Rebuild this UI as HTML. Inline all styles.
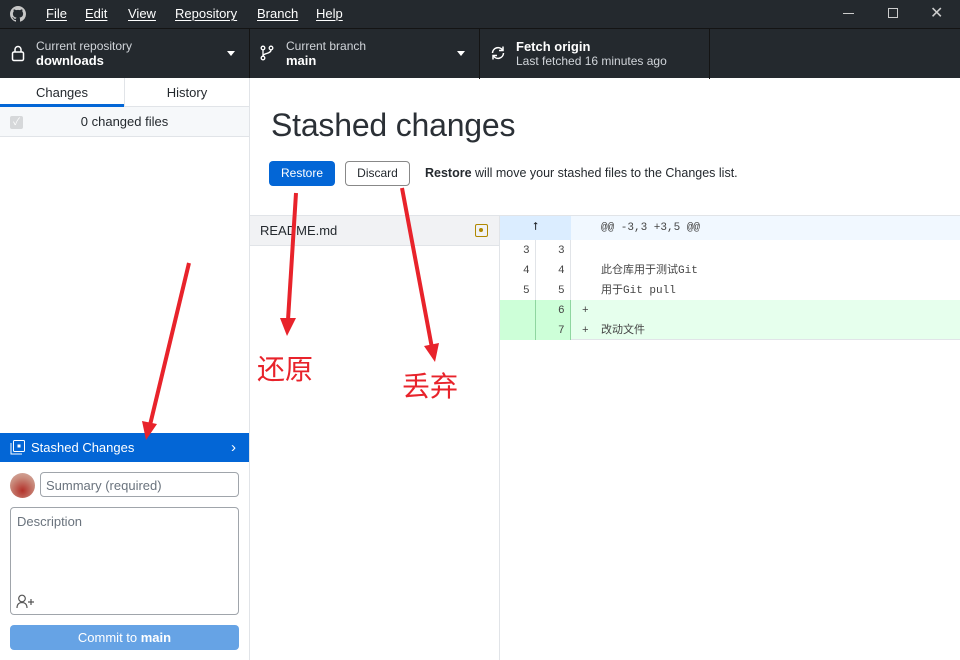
<!DOCTYPE html>
<html><head><meta charset="utf-8"><style>
*{box-sizing:border-box;margin:0;padding:0}
body{width:960px;height:660px;overflow:hidden;font-family:"Liberation Sans","Noto Sans CJK SC",sans-serif;font-size:13px;color:#24292e;background:#fff;position:relative}
.abs{position:absolute}
.title{left:0;top:0;width:960px;height:28px;background:#24292e;color:#fff}
.menu span{position:absolute;top:6px;font-size:13px;color:#fff;text-decoration:underline;text-decoration-thickness:1px;text-underline-offset:2px}
.tool{left:0;top:28px;width:960px;height:50px;background:#24292e;border-top:1px solid #141414}
.tb{position:absolute;top:0;height:50px;border-right:1px solid #141414;color:#fff}
.tb .l1{position:absolute;top:10px;font-size:12px;color:#d1d5da}
.tb .l2{position:absolute;top:24px;font-size:13px;font-weight:bold}
.caret{position:absolute;top:22px;width:0;height:0;border-left:4px solid transparent;border-right:4px solid transparent;border-top:5px solid #fff}
.mono{font-family:"Liberation Mono","Noto Sans CJK SC",monospace;font-size:11px;color:#444;height:20px;line-height:20px;white-space:nowrap}
</style></head><body>
<div class="abs title">
<svg class="abs" style="left:10px;top:6px" width="16" height="16" viewBox="0 0 16 16"><path fill="#c7c7c7" d="M8 0C3.58 0 0 3.58 0 8c0 3.54 2.29 6.53 5.47 7.59.4.07.55-.17.55-.38v-1.33c-2.23.48-2.7-1.07-2.7-1.07-.36-.92-.89-1.17-.89-1.17-.73-.5.05-.49.05-.49.8.06 1.23.83 1.23.83.72 1.22 1.87.87 2.33.67.07-.52.28-.87.51-1.07-1.78-.2-3.65-.89-3.65-3.95 0-.87.31-1.59.82-2.15-.08-.2-.36-1.02.08-2.12 0 0 .67-.21 2.2.82A7.6 7.6 0 0 1 8 3.9c.68 0 1.36.09 2 .27 1.53-1.04 2.2-.82 2.2-.82.44 1.1.16 1.92.08 2.12.51.56.82 1.28.82 2.15 0 3.07-1.87 3.75-3.65 3.95.29.25.54.73.54 1.48v2.2c0 .21.15.46.55.38A8 8 0 0 0 16 8c0-4.42-3.58-8-8-8z"/></svg>
<div class="menu"><span style="left:46px">File</span><span style="left:85px">Edit</span><span style="left:128px">View</span><span style="left:175px">Repository</span><span style="left:257px">Branch</span><span style="left:316px">Help</span></div>
<div class="abs" style="left:843px;top:13px;width:11px;height:1px;background:#ccc"></div>
<div class="abs" style="left:888px;top:8px;width:10px;height:10px;border:1px solid #ccc"></div>
<div class="abs" style="left:930px;top:3px;color:#ccc;font-size:16px">✕</div>
</div>
<div class="abs tool">
<div class="tb" style="left:0;width:250px">
<svg class="abs" style="left:11px;top:16px" width="14" height="17" viewBox="0 0 14 17"><rect x="1.5" y="7" width="11" height="8.5" rx="1.5" fill="none" stroke="#fff" stroke-width="1.5"/><path d="M4 7V4.5a3 3 0 0 1 6 0V7" fill="none" stroke="#fff" stroke-width="1.5"/></svg>
<div class="l1" style="left:36px">Current repository</div><div class="l2" style="left:36px">downloads</div><div class="caret" style="left:227px"></div></div>
<div class="tb" style="left:250px;width:230px">
<svg class="abs" style="left:10px;top:16px" width="14" height="16" viewBox="0 0 14 16"><circle cx="3" cy="3" r="1.8" fill="none" stroke="#fff" stroke-width="1.3"/><circle cx="3" cy="13" r="1.8" fill="none" stroke="#fff" stroke-width="1.3"/><circle cx="11" cy="3" r="1.8" fill="none" stroke="#fff" stroke-width="1.3"/><path d="M3 5v6M11 5c0 4-8 3-8 6" fill="none" stroke="#fff" stroke-width="1.3"/></svg>
<div class="l1" style="left:36px">Current branch</div><div class="l2" style="left:36px">main</div><div class="caret" style="left:207px"></div></div>
<div class="tb" style="left:480px;width:230px">
<svg class="abs" style="left:10px;top:16px" width="16" height="16" viewBox="0 0 16 16"><path d="M13.5 8a5.5 5.5 0 0 1-10 3M2.5 8a5.5 5.5 0 0 1 10-3" fill="none" stroke="#fff" stroke-width="1.5"/><path d="M13 1.5v4h-4M3 14.5v-4h4" fill="none" stroke="#fff" stroke-width="1.5"/></svg>
<div class="l2" style="left:36px;top:10px">Fetch origin</div><div class="l1" style="left:36px;top:25px">Last fetched 16 minutes ago</div></div>
</div>
<div class="abs" style="left:0;top:78px;width:250px;height:582px;border-right:1px solid #e1e4e8">
<div class="abs" style="left:0;top:0;width:124px;height:29px;border-bottom:3px solid #0366d6;text-align:center;line-height:30px">Changes</div>
<div class="abs" style="left:124px;top:0;width:125px;height:29px;border-left:1px solid #e1e4e8;border-bottom:1px solid #e1e4e8;text-align:center;line-height:30px">History</div>
<div class="abs" style="left:0;top:29px;width:249px;height:30px;background:#f6f8fa;border-bottom:1px solid #e1e4e8;text-align:center;line-height:30px">0 changed files</div>
<div class="abs" style="left:10px;top:38px;width:13px;height:13px;background:#d6d8da;border-radius:2px;color:#fff;font-size:10px;line-height:13px;text-align:center">✓</div>
<div class="abs" style="left:0;top:355px;width:249px;height:29px;background:#0366d6;color:#fff;line-height:29px;padding-left:31px">Stashed Changes<span style="position:absolute;right:13px;font-size:15px">›</span>
<svg class="abs" style="left:10px;top:7px" width="15" height="15" viewBox="0 0 15 15"><rect x="3.5" y="0.5" width="11" height="11" rx="1" fill="none" stroke="#fff"/><path d="M1 3v11h11" fill="none" stroke="#fff"/><rect x="7.5" y="4.5" width="3" height="3" fill="#fff"/></svg></div>
<div class="abs" style="left:10px;top:395px;width:25px;height:25px;border-radius:50%;background:radial-gradient(circle at 50% 70%,#b3312a,#c98c7d 60%,#d8b3a8)"></div>
<div class="abs" style="left:40px;top:394px;width:199px;height:25px;border:1px solid #a0a5ab;border-radius:4px;padding:5px;color:#6a737d">Summary (required)</div>
<div class="abs" style="left:10px;top:429px;width:229px;height:108px;border:1px solid #a0a5ab;border-radius:4px;padding:6px 6px;color:#6a737d">Description
<svg class="abs" style="left:5px;top:86px" width="20" height="15" viewBox="0 0 20 15"><circle cx="6" cy="4.5" r="3.3" fill="none" stroke="#555" stroke-width="1.2"/><path d="M1 14c0-4 2.5-5.5 5-5.5s5 1.5 5 5.5" fill="none" stroke="#555" stroke-width="1.2"/><path d="M15 5v6M12 8h6" stroke="#555" stroke-width="1.2"/></svg></div>
<div class="abs" style="left:10px;top:547px;width:229px;height:25px;background:#66a3e5;border-radius:4px;color:#fff;text-align:center;line-height:25px">Commit to <b>main</b></div>
</div>
<div class="abs" style="left:271px;top:107px;font-size:32px;color:#2b3036;letter-spacing:-0.2px">Stashed changes</div>
<div class="abs" style="left:269px;top:161px;width:66px;height:25px;background:#0366d6;border-radius:4px;color:#fff;text-align:center;line-height:25px;font-size:12px">Restore</div>
<div class="abs" style="left:345px;top:161px;width:65px;height:25px;border:1px solid #888;border-radius:4px;text-align:center;line-height:23px;font-size:12px">Discard</div>
<div class="abs" style="left:425px;top:166px;font-size:12.5px"><b>Restore</b> will move your stashed files to the Changes list.</div>
<div class="abs" style="left:250px;top:215px;width:710px;height:1px;background:#e1e4e8"></div>
<div class="abs" style="left:250px;top:216px;width:249px;height:30px;background:#f1f2f4;border-bottom:1px solid #e1e4e8;line-height:29px;padding-left:10px">README.md
<div class="abs" style="left:225px;top:8px;width:13px;height:13px;border:1.5px solid #b08800;border-radius:2px"><div style="margin:3px;width:4px;height:4px;background:#b08800;border-radius:50%"></div></div></div>
<div class="abs" style="left:499px;top:216px;width:1px;height:444px;background:#e1e4e8"></div>
<div class="abs" style="left:500px;top:216px;width:460px;height:24px;background:#f1f8ff"></div>
<div class="abs" style="left:500px;top:216px;width:71px;height:24px;background:#dbedff;text-align:center;font-size:11px;line-height:22px">⭡</div>
<div class="abs mono" style="left:601px;top:218px">@@ -3,3 +3,5 @@</div>
<div class="abs" style="left:535px;top:240px;width:1px;height:60px;background:#e1e4e8"></div>
<div class="abs" style="left:570px;top:240px;width:1px;height:60px;background:#e1e4e8"></div>
<div class="abs" style="left:500px;top:300px;width:460px;height:40px;background:#e6ffed;border-bottom:1px solid #e1e4e8"></div>
<div class="abs" style="left:500px;top:300px;width:71px;height:40px;background:#cdffd8"></div>
<div class="abs" style="left:535px;top:300px;width:1px;height:40px;background:#8fd6a0"></div>
<div class="abs" style="left:570px;top:300px;width:1px;height:40px;background:#8fd6a0"></div>
<div class="abs mono" style="left:523px;top:241px">3</div><div class="abs mono" style="left:558px;top:241px">3</div>
<div class="abs mono" style="left:523px;top:261px">4</div><div class="abs mono" style="left:558px;top:261px">4</div><div class="abs mono" style="left:601px;top:261px">此仓库用于测试Git</div>
<div class="abs mono" style="left:523px;top:281px">5</div><div class="abs mono" style="left:558px;top:281px">5</div><div class="abs mono" style="left:601px;top:281px">用于Git pull</div>
<div class="abs mono" style="left:558px;top:301px">6</div><div class="abs mono" style="left:582px;top:301px">+</div>
<div class="abs mono" style="left:558px;top:321px">7</div><div class="abs mono" style="left:582px;top:321px">+</div><div class="abs mono" style="left:601px;top:321px">改动文件</div>
<svg class="abs" style="left:0;top:0" width="960" height="660">
<g stroke="#e8232b" stroke-width="4" fill="#e8232b">
<line x1="296" y1="193" x2="288" y2="320"/><polygon points="280,318 296,318 287,336" stroke="none"/>
<line x1="402" y1="188" x2="432" y2="348"/><polygon points="424,346 439,343 435,362" stroke="none"/>
<line x1="189" y1="263" x2="150" y2="425"/><polygon points="142,421 157,424 146,440" stroke="none"/>
</g></svg>
<div class="abs" style="left:257px;top:348px;font-size:28px;color:#e8232b;font-family:'Noto Sans CJK SC',sans-serif">还原</div>
<div class="abs" style="left:402px;top:365px;font-size:28px;color:#e8232b;font-family:'Noto Sans CJK SC',sans-serif">丢弃</div>
</body></html>
